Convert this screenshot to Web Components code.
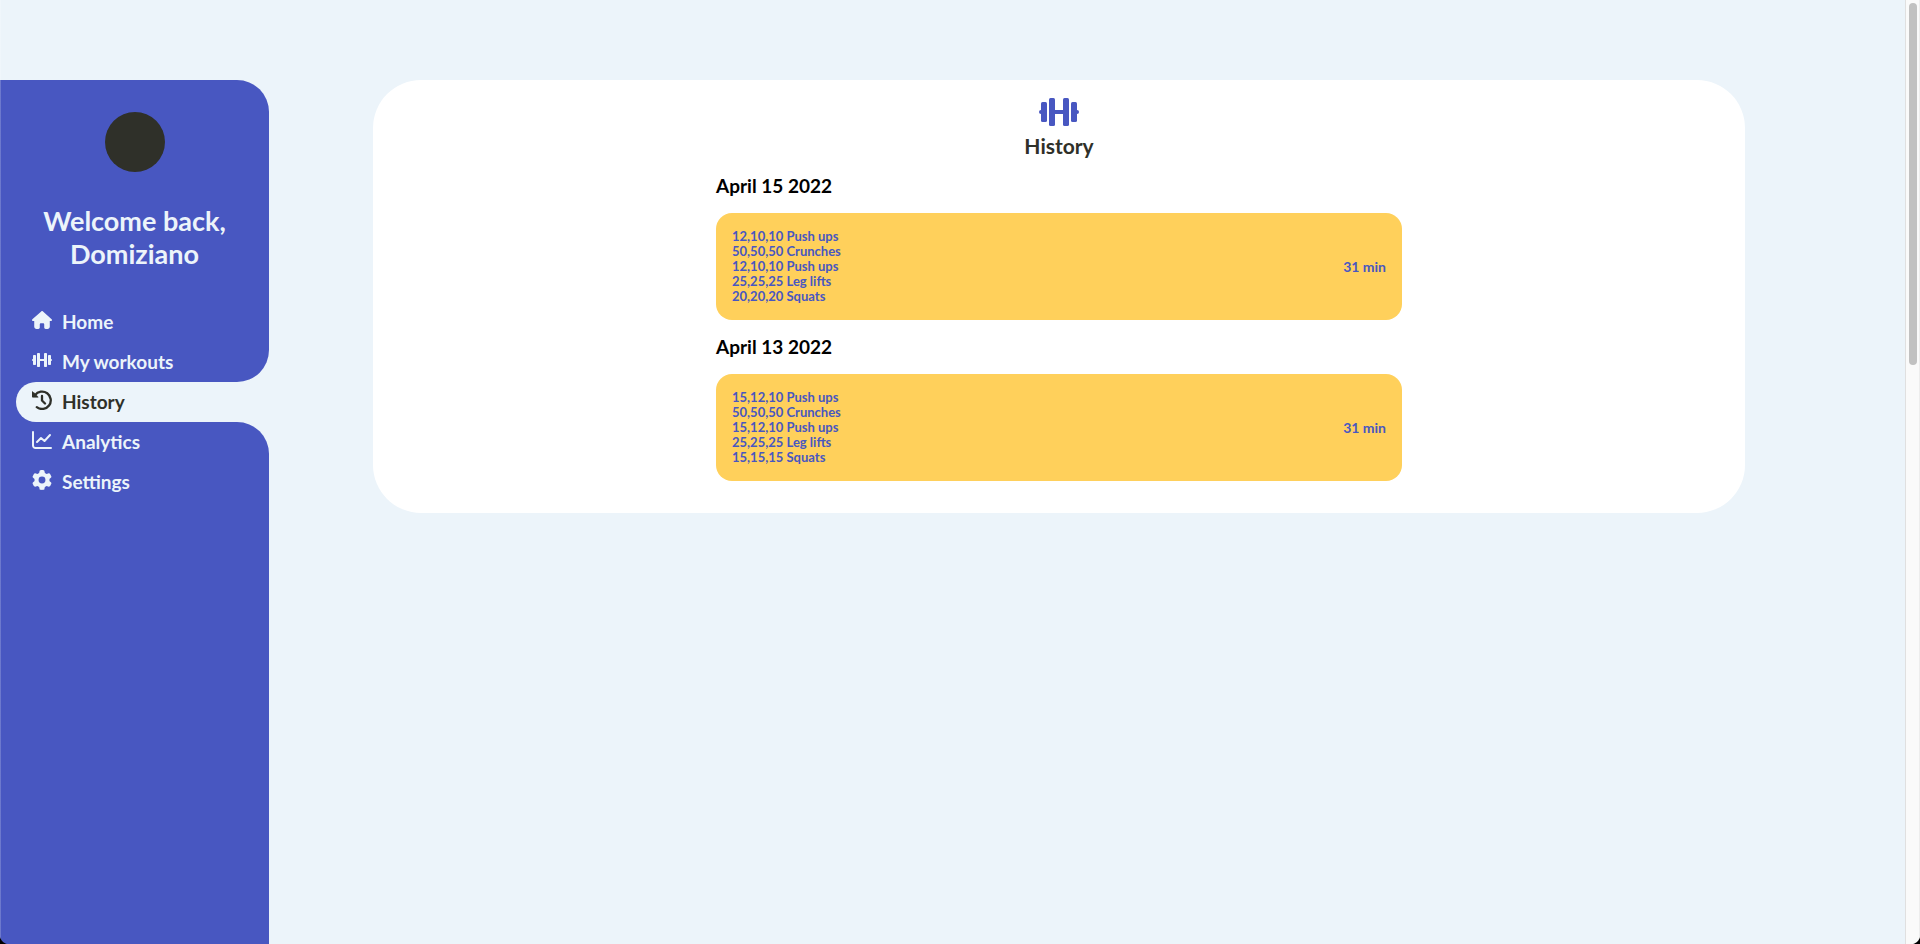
<!DOCTYPE html>
<html lang="en">
<head>
<meta charset="utf-8">
<title>History</title>
<style>
  :root {
    --blue: #4857c1;
    --light: #ecf4fa;
    --dark: #2f3029;
    --yellow: #ffd05b;
  }
  html, body { height: 100%; }
  body { margin: 0; font-family: Lato, "Open Sans", sans-serif; font-weight: 700; }
</style>
</head>
<body>
<fitness-app></fitness-app>
<script>
const ICONS = {
  home: ['0 0 576 512', '<path d="M575.800 255.500c0 18-15 32.100-32 32.100h-32l.7 160.200c0 35.300-28.700 64.200-64 64.200H392c-22.100 0-40-17.900-40-40v-88c0-17.700-14.300-32-32-32h-64c-17.700 0-32 14.300-32 32v88c0 22.100-17.900 40-40 40h-55.900c-35.300 0-64-28.900-64-64.200V287.600H32c-18 0-32-14-32-32.100 0-9 3-17 10-24L266.400 8c7-7 15-8 22-8s15 2 21 7l255.400 224.500c8 7 12 15 11 24z"/>'],
  barbell: ['0 0 40 28', '<rect x="0" y="12" width="4" height="4" rx="2"/><rect x="36" y="12" width="4" height="4" rx="2"/><rect x="14" y="12" width="12" height="4"/><rect x="2" y="4" width="6" height="20" rx="1.5"/><rect x="10" y="0" width="6" height="28" rx="1.5"/><rect x="24" y="0" width="6" height="28" rx="1.5"/><rect x="32" y="4" width="6" height="20" rx="1.5"/>'],
  history: ['0 0 20 20', '<path d="M3 5.200A8.700 8.700 0 1 1 4.800 17.200M10 6v4.500l3 3" fill="none" stroke="currentColor" stroke-width="2.300" stroke-linecap="round" stroke-linejoin="round"/><path d="M0 1.500l1.500 1L3 3.500l3.200 3.700H.8A.8.8 0 0 1 0 6.400z" stroke="currentColor" stroke-width=".600"/>'],
  chart: ['0 0 20 18', '<path d="M1 1v13.500A2.500 2.500 0 0 0 3.500 17H19M5 11l4-4 3.500 3L18 4" fill="none" stroke="currentColor" stroke-width="2" stroke-linecap="round" stroke-linejoin="round"/>'],
  gear: ['0 0 512 512', '<path fill-rule="evenodd" d="M495.900 166.600c3.200 8.700.5 18.400-6.400 24.600l-43.300 39.400c1.100 8.300 1.700 16.800 1.700 25.400s-.6 17.100-1.700 25.400l43.300 39.400c6.900 6.200 9.600 15.900 6.400 24.600-4.400 11.900-9.700 23.300-15.800 34.300l-4.700 8.100c-6.600 11-14 21.400-22.100 31.200-5.900 7.200-15.700 9.600-24.500 6.800l-55.700-17.700c-13.400 10.300-28.200 18.900-44 25.400l-12.500 57.100c-2 9.100-9 16.300-18.200 17.800-13.800 2.300-28 3.500-42.500 3.500s-28.700-1.200-42.500-3.500c-9.200-1.500-16.200-8.700-18.200-17.800l-12.500-57.100c-15.800-6.500-30.600-15.100-44-25.400l-55.600 17.800c-8.800 2.800-18.600.3-24.500-6.800-8.100-9.800-15.500-20.200-22.100-31.200l-4.700-8.100c-6.100-11-11.400-22.400-15.800-34.300-3.200-8.700-.5-18.400 6.400-24.600l43.300-39.400C64.600 273.100 64 264.600 64 256s.6-17.100 1.700-25.400l-43.300-39.400c-6.900-6.200-9.600-15.900-6.400-24.600 4.400-11.900 9.700-23.300 15.800-34.300l4.700-8.100c6.600-11 14-21.400 22.100-31.200 5.900-7.200 15.700-9.600 24.500-6.800l55.700 17.700c13.400-10.300 28.200-18.900 44-25.400l12.500-57.100c2-9.100 9-16.300 18.200-17.800C227.300 1.200 241.500 0 256 0s28.700 1.200 42.500 3.500c9.200 1.500 16.200 8.700 18.200 17.800l12.500 57.100c15.800 6.500 30.600 15.100 44 25.400l55.700-17.700c8.800-2.800 18.600-.3 24.500 6.800 8.100 9.800 15.500 20.200 22.100 31.200l4.700 8.100c6.100 11 11.400 22.400 15.800 34.300zM256 344a88 88 0 1 0 0-176 88 88 0 1 0 0 176z"/>']
};

function define(name, html, setup) {
  const template = document.createElement('template');
  template.innerHTML = html;
  customElements.define(name, class extends HTMLElement {
    connectedCallback() {
      if (this.shadowRoot) return;
      this.attachShadow({ mode: 'open' }).append(template.content.cloneNode(true));
      if (setup) setup(this, this.shadowRoot);
    }
  });
}

define('app-icon', `
  <style>
    :host { display: block; }
    svg { display: block; width: 100%; height: 100%; fill: currentColor; }
  </style>
  <svg aria-hidden="true"></svg>`, (el, root) => {
  const [box, shapes] = ICONS[el.getAttribute('name')];
  const svg = root.querySelector('svg');
  svg.setAttribute('viewBox', box);
  svg.innerHTML = shapes;
});

define('nav-item', `
  <style>
    :host { display: block; background: var(--blue); color: var(--light); }
    :host([before]) { border-bottom-right-radius: 32px; }
    :host([after]) { border-top-right-radius: 32px; }
    :host([current]) { background: linear-gradient(to right, var(--blue) 40px, var(--light) 40px); color: var(--dark); }
    a { display: flex; align-items: center; gap: 10px; height: 40px; margin-left: 16px; padding-left: 16px;
        border-radius: 20px 0 0 20px; color: inherit; text-decoration: none; font-size: 19px; line-height: 24px; }
    :host([current]) a { background: var(--light); }
    app-icon { width: 20px; height: 20px; margin-bottom: 4px; }
  </style>
  <a href="#"><span><slot></slot></span></a>`, (el, root) => {
  const link = root.querySelector('a');
  const icon = document.createElement('app-icon');
  icon.setAttribute('name', el.getAttribute('icon'));
  link.prepend(icon);
  if (el.hasAttribute('current')) link.setAttribute('aria-current', 'page');
});

define('app-sidebar', `
  <style>
    :host { display: flex; flex-direction: column; flex: 0 0 269px; margin-top: 80px; }
    header { display: flex; flex-direction: column; align-items: center; gap: 32px; padding: 32px 0;
             background: var(--blue); color: var(--light); border-top-right-radius: 32px; }
    .avatar { width: 60px; height: 60px; border-radius: 50%; background: var(--dark); }
    h1 { margin: 0; text-align: center; font-size: 27px; line-height: 33px; font-weight: 700; }
    .rest { flex: 1; background: var(--blue); }
  </style>
  <header><div class="avatar"></div><h1>Welcome back,<br>Domiziano</h1></header>
  <nav>
    <nav-item icon="home">Home</nav-item>
    <nav-item icon="barbell" before>My workouts</nav-item>
    <nav-item icon="history" current>History</nav-item>
    <nav-item icon="chart" after>Analytics</nav-item>
    <nav-item icon="gear">Settings</nav-item>
  </nav>
  <div class="rest"></div>`);

define('workout-entry', `
  <style>
    :host { display: block; }
    h3 { margin: 0 0 16px; font-size: 19px; line-height: 22px; color: #000; font-weight: 700; }
    .card { display: flex; align-items: center; justify-content: space-between; padding: 16px;
            border-radius: 16px; background: var(--yellow); color: var(--blue); font-size: 14px; line-height: 18px; }
    .sets { font-size: 13px; line-height: 15px; }
  </style>
  <h3><slot name="date"></slot></h3>
  <div class="card"><div class="sets"><slot></slot></div><slot name="time"></slot></div>`);

define('history-panel', `
  <style>
    :host { display: block; background: #fff; border-radius: 48px; padding: 16px 0 32px; color: var(--dark); }
    app-icon { width: 40px; height: 32px; margin: 0 auto; color: var(--blue); }
    h2 { margin: 4px 0 16px; text-align: center; font-size: 21px; line-height: 27px; font-weight: 700; }
    .list { display: flex; flex-direction: column; gap: 16px; width: 50%; margin: 0 auto; }
    p { margin: 0; }
  </style>
  <app-icon name="barbell"></app-icon>
  <h2>History</h2>
  <div class="list">
    <workout-entry>
      <span slot="date">April 15 2022</span>
      <p>12,10,10 Push ups</p><p>50,50,50 Crunches</p><p>12,10,10 Push ups</p><p>25,25,25 Leg lifts</p><p>20,20,20 Squats</p>
      <span slot="time">31 min</span>
    </workout-entry>
    <workout-entry>
      <span slot="date">April 13 2022</span>
      <p>15,12,10 Push ups</p><p>50,50,50 Crunches</p><p>15,12,10 Push ups</p><p>25,25,25 Leg lifts</p><p>15,15,15 Squats</p>
      <span slot="time">31 min</span>
    </workout-entry>
  </div>`);

define('scroll-track', `
  <style>
    :host { display: block; flex: 0 0 15px; box-sizing: border-box; padding: 3px 2px 3px 3px;
            border-left: 1px solid #e0e0e0; border-right: 1px solid #ededed; background: #fafafa; }
    div { height: 39%; max-height: 362px; border-radius: 4px; background: #c1c1c1; }
  </style>
  <div></div>`);

define('fitness-app', `
  <style>
    :host { display: flex; position: relative; min-height: 100%; background: var(--light); }
    main { flex: 1; padding: 80px 160px 80px 104px; }
    .frame { position: absolute; inset: 0; pointer-events: none;
      background:
        radial-gradient(circle at 100% 0, transparent 10px, #000 11px) left bottom / 10px 10px no-repeat,
        radial-gradient(circle at 0 0, transparent 10px, #000 11px) right bottom / 10px 10px no-repeat,
        linear-gradient(#ffffff33, #ffffff33) left / 1px 100% no-repeat; }
  </style>
  <app-sidebar></app-sidebar>
  <main><history-panel></history-panel></main>
  <scroll-track></scroll-track>
  <div class="frame"></div>`);
</script>
</body>
</html>
